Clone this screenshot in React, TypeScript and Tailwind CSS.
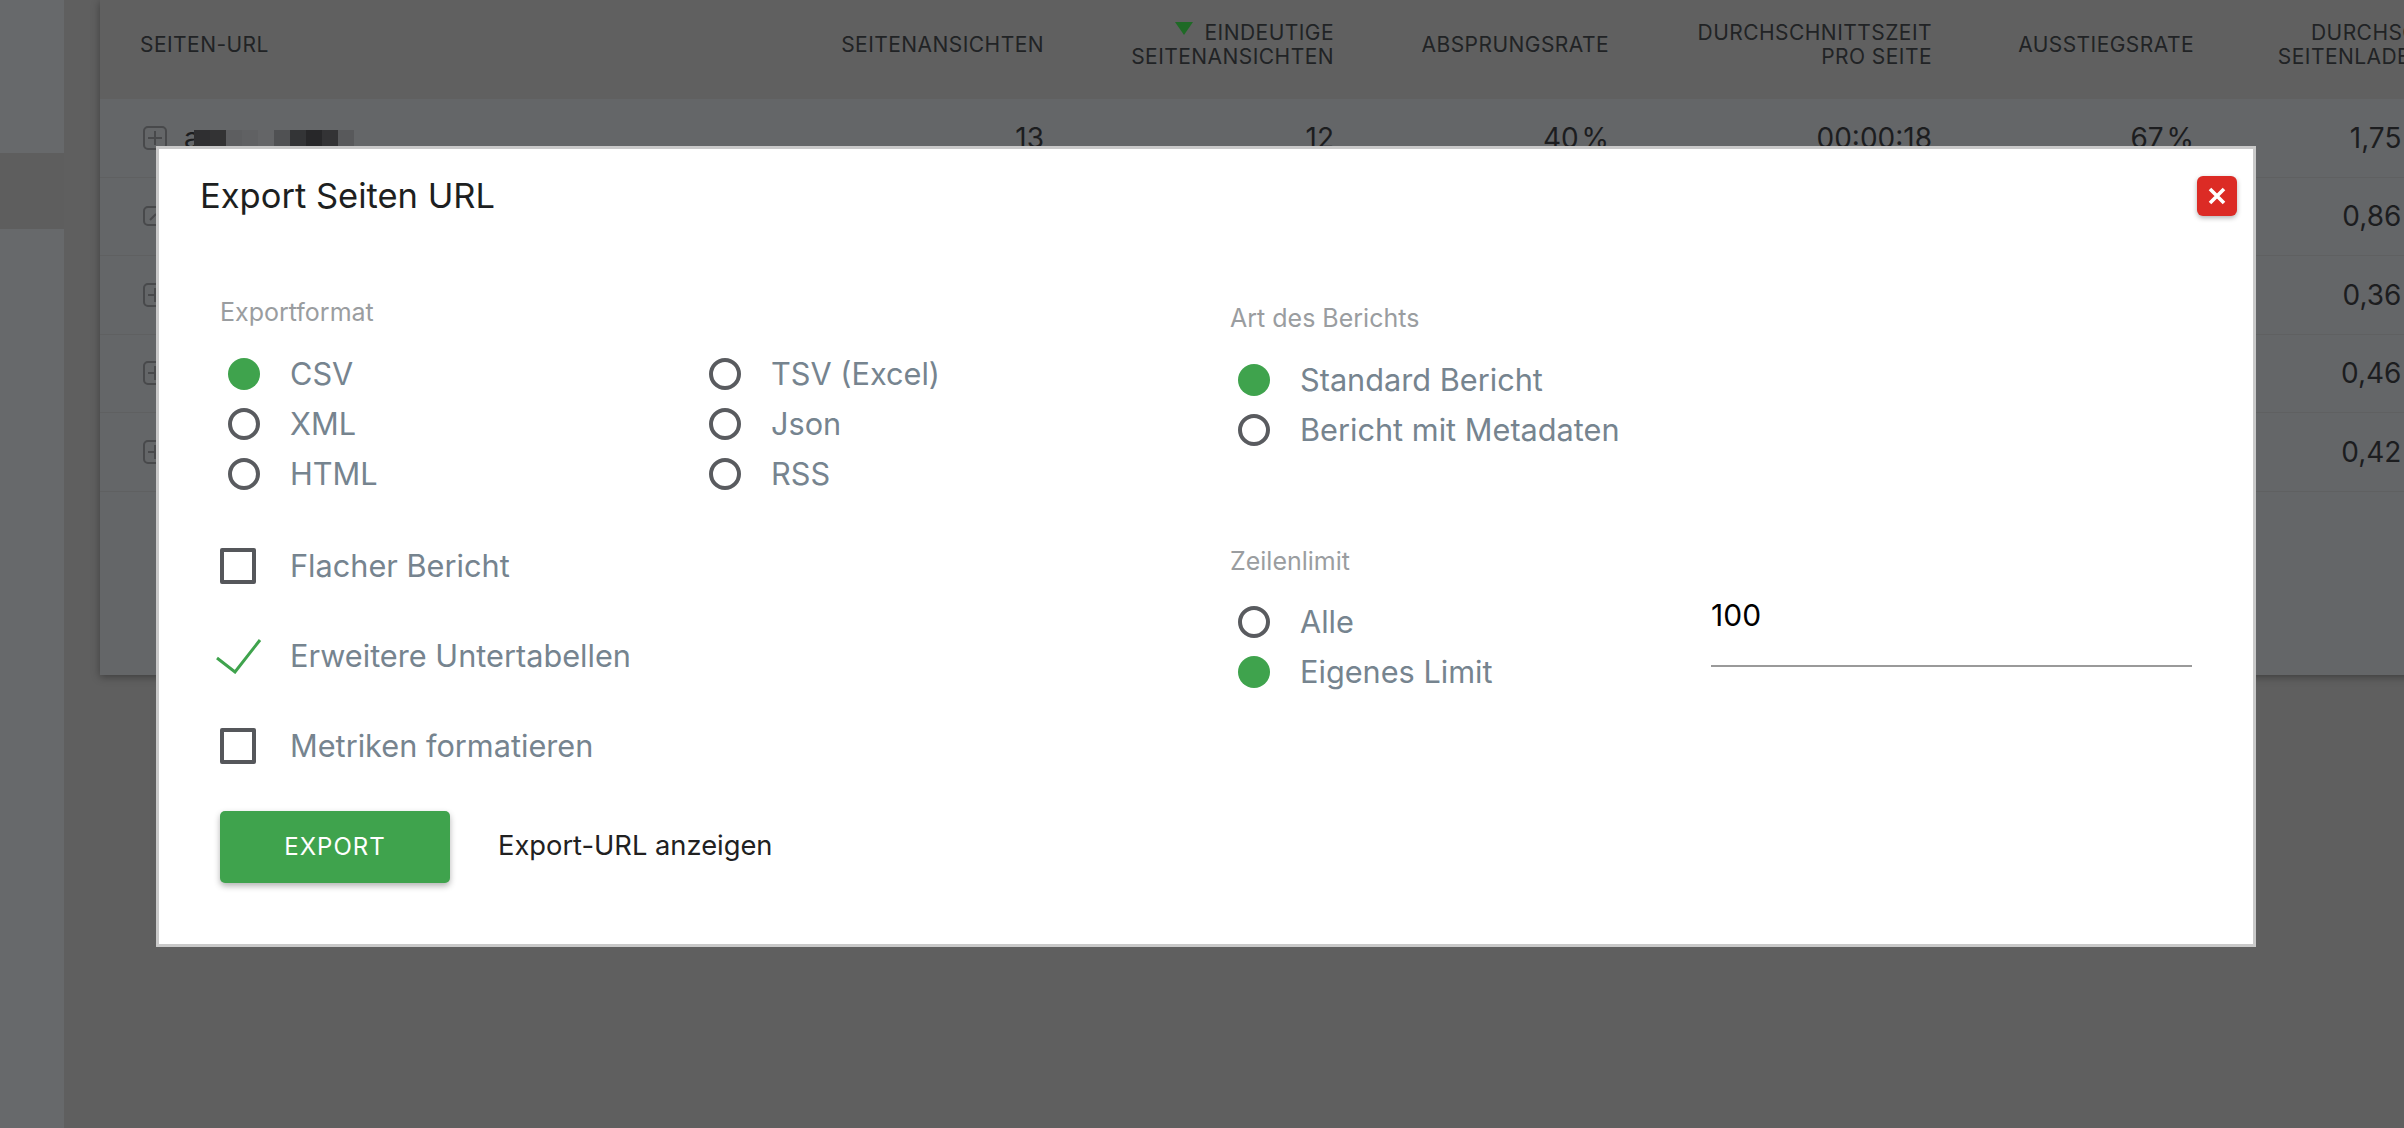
import React from 'react';

const COLS = 'grid grid-cols-[701px_243px_290px_275px_323px_262px_268px] w-[2368px]';

const ROWS = [
  { values: ['13', '12', '40 %', '00:00:18', '67 %', '1,75 Sek.'] },
  { values: ['', '', '', '', '', '0,86 Sek.'] },
  { values: ['', '', '', '', '', '0,36 Sek.'] },
  { values: ['', '', '', '', '', '0,46 Sek.'] },
  { values: ['', '', '', '', '', '0,42 Sek.'] },
];

// pixelated url in the first row
const BLUR = ['#2f2f31', '#333334', '#5d5e60', '#606163', '#646567', '#505153', '#333436', '#272729', '#333335', '#58595b'];

const Expand = ({ small = false }: { small?: boolean }) =>
  small ? (
    <svg width="26" height="22" viewBox="0 0 26 22" fill="none" stroke="#48494b" strokeWidth="2" className="shrink-0">
      <rect x="2" y="2" width="22" height="18" rx="4" />
      <path d="M8 15l6-6" />
    </svg>
  ) : (
    <svg width="26" height="26" viewBox="0 0 26 26" fill="none" stroke="#48494b" strokeWidth="2" className="shrink-0">
      <rect x="2" y="2" width="22" height="22" rx="4" />
      <path d="M13 6v14M6 13h14" />
    </svg>
  );

const Radio = ({ label, checked = false }: { label: string; checked?: boolean }) => (
  <div className="flex h-[50px] items-center gap-[30px]">
    {checked ? (
      <span className="h-8 w-8 shrink-0 rounded-full bg-[#3fa34d]" />
    ) : (
      <span className="h-8 w-8 shrink-0 rounded-full border-4 border-[#595b5f]" />
    )}
    <span className="text-[30.7px] leading-none text-[#76848f]">{label}</span>
  </div>
);

const Checkbox = ({ label, checked = false }: { label: string; checked?: boolean }) => (
  <div className="flex h-[90px] items-center">
    <span className="flex h-9 w-9 shrink-0 items-center justify-center">
      {checked ? (
        <svg width="48" height="36" viewBox="0 0 48 36" fill="none" stroke="#3fa34d" strokeWidth="3" className="shrink-0">
          <path d="M3 20l18 14L46 2" />
        </svg>
      ) : (
        <span className="h-9 w-9 rounded-[2px] border-4 border-[#55575b]" />
      )}
    </span>
    <span className="ml-[34px] text-[30.7px] leading-none text-[#76848f]">{label}</span>
  </div>
);

const Label = ({ children }: { children: React.ReactNode }) => (
  <div className="h-9 text-[25px] leading-9 text-[#9a9da0]">{children}</div>
);

export default function App() {
  return (
    <div className="relative flex h-[1128px] w-[2404px] overflow-hidden bg-[#5f5f5f] font-['Inter',sans-serif]">
      {/* Sidebar */}
      <div className="flex h-full w-[64px] shrink-0 flex-col">
        <div className="h-[153px] bg-[#67696b]" />
        <div className="h-[76px] bg-[#5e5e5e]" />
        <div className="flex-1 bg-[#67696b]" />
      </div>

      {/* Table card */}
      <div className="ml-9 h-[675px] w-[2368px] shrink-0 bg-[#646668] shadow-[0_2px_8px_rgba(0,0,0,0.35)]">
        <div className={`${COLS} h-[99px] items-center bg-[#606060] pb-[9px] text-right text-[21px] leading-6 tracking-[0.45px] text-[#212325]`}>
          <div className="pl-10 text-left">SEITEN-URL</div>
          <div>SEITENANSICHTEN</div>
          <div>
            <span className="mr-[12px] inline-block h-0 w-0 -translate-y-[5px] border-x-[9px] border-t-[13px] border-x-transparent border-t-[#1f6a26]" />
            EINDEUTIGE
            <br />
            SEITENANSICHTEN
          </div>
          <div>ABSPRUNGSRATE</div>
          <div>
            DURCHSCHNITTSZEIT
            <br />
            PRO SEITE
          </div>
          <div>AUSSTIEGSRATE</div>
          <div className="mr-[5px]">
            DURCHSCHN.
            <br />
            SEITENLADEZEIT
          </div>
        </div>

        {ROWS.map((row, i) => (
          <div
            key={i}
            className={`${COLS} h-[78.5px] items-center border-b border-[#5f6061] text-right text-[28px] text-[#1c1d1f] [word-spacing:-5px]`}
          >
            <div className="flex items-center pl-[42px] text-left">
              <Expand small={i === 1} />
              {i === 0 && (
                <div className="ml-4 flex items-center">
                  <span>a</span>
                  <div className="ml-[-6px] flex">
                    {BLUR.map((c, j) => (
                      <span key={j} className="h-4 w-4" style={{ backgroundColor: c }} />
                    ))}
                  </div>
                </div>
              )}
            </div>
            {row.values.map((v, j) => (
              <div key={j}>{v}</div>
            ))}
          </div>
        ))}
      </div>

      {/* Export dialog */}
      <div className="absolute left-[156px] top-[146px] h-[801px] w-[2100px] border-[3px] border-[#c9c9c9] bg-white">
        <div className="flex items-start justify-between pl-[41px] pr-[16px] pt-[27px]">
          <h2 className="text-[34.5px] leading-10 text-[#1d1f21]">Export Seiten URL</h2>
          <button className="flex h-10 w-10 items-center justify-center rounded-md bg-[#dc2b25] shadow-[0_2px_5px_rgba(0,0,0,0.3)]">
            <svg width="18" height="18" viewBox="0 0 18 18" fill="none" stroke="white" strokeWidth="3.6">
              <path d="M2 2l14 14M16 2L2 16" />
            </svg>
          </button>
        </div>

        <div className="mt-[78px] grid grid-cols-[1010px_1fr] pl-[61px]">
          <div>
            <Label>Exportformat</Label>
            <div className="mt-[19px] grid w-[970px] grid-cols-2 pl-2">
              <div>
                <Radio label="CSV" checked />
                <Radio label="XML" />
                <Radio label="HTML" />
              </div>
              <div>
                <Radio label="TSV (Excel)" />
                <Radio label="Json" />
                <Radio label="RSS" />
              </div>
            </div>
            <div className="mt-[22px]">
              <Checkbox label="Flacher Bericht" />
              <Checkbox label="Erweitere Untertabellen" checked />
              <Checkbox label="Metriken formatieren" />
            </div>
            <div className="mt-[20px] flex items-center">
              <button className="h-[72px] w-[230px] rounded-[5px] bg-[#3fa34d] text-[24px] tracking-[1px] text-white shadow-[0_3px_6px_rgba(0,0,0,0.3)]">
                EXPORT
              </button>
              <span className="mb-[2px] ml-12 text-[27.3px] text-[#212121]">Export-URL anzeigen</span>
            </div>
          </div>

          <div className="pt-[6px]">
            <Label>Art des Berichts</Label>
            <div className="mt-[19px] pl-2">
              <Radio label="Standard Bericht" checked />
              <Radio label="Bericht mit Metadaten" />
            </div>
            <div className="mt-[88px]">
              <Label>Zeilenlimit</Label>
            </div>
            <div className="mt-[18px] flex">
              <div className="w-[481px] pl-2">
                <Radio label="Alle" />
                <Radio label="Eigenes Limit" checked />
              </div>
              <div className="-mt-[18px] h-[88px] w-[481px] border-b-2 border-[#9a9a9a] pt-[16px] text-[30px] leading-10 text-black">
                100
              </div>
            </div>
          </div>
        </div>
      </div>
    </div>
  );
}
